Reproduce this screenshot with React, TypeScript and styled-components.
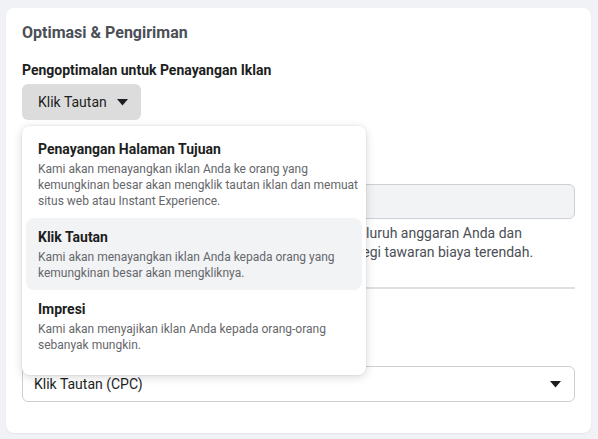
import styled, { createGlobalStyle } from "styled-components";

const GlobalStyle = createGlobalStyle`
  html, body {
    margin: 0;
    padding: 0;
    background: #f0f2f5;
    font-family: Roboto, "Liberation Sans", Arial, sans-serif;
  }
`;

const Page = styled.div`
  width: 598px;
  height: 439px;
  padding: 8px 7px 0 6px;
  box-sizing: border-box;
`;

const Card = styled.div`
  position: relative;
  height: 425px;
  background: #fff;
  border-radius: 8px;
  padding: 15px 16px 0 16px;
  box-sizing: border-box;
  box-shadow: 0 1px 2px rgba(0, 0, 0, 0.06);
`;

const Title = styled.div`
  font-size: 16px;
  line-height: 20px;
  font-weight: 700;
  color: #4b4f56;
`;

const FieldLabel = styled.div<{ $top: number }>`
  margin-top: ${p => p.$top}px;
  font-size: 14px;
  line-height: 18px;
  font-weight: 700;
  color: #1c1e21;
`;

const Caret = () => (
  <svg width="11" height="7" viewBox="0 0 11 7">
    <polygon points="0,0 11,0 5.5,6.5" fill="#1c1e21" />
  </svg>
);

const DropButton = styled.button`
  margin-top: 5px;
  height: 36px;
  display: inline-flex;
  align-items: center;
  gap: 10px;
  padding: 0 13px 0 16px;
  border: none;
  border-radius: 6px;
  background: #dcdcdc;
  font-family: inherit;
  font-size: 14px;
  color: #1c1e21;
`;

const GrayInput = styled.div`
  margin-top: 16px;
  height: 35px;
  box-sizing: border-box;
  background: #f2f3f5;
  border: 1px solid #ccd0d5;
  border-radius: 6px;
`;

const Help = styled.div`
  margin-top: 5px;
  font-size: 14px;
  line-height: 19px;
  color: #4b4f56;
  white-space: nowrap;
`;

const Divider = styled.hr`
  margin: 25px 0 0 0;
  border: none;
  border-top: 2px solid #dddfe2;
`;

const Select = styled.div`
  margin-top: 39px;
  height: 36px;
  box-sizing: border-box;
  border: 1px solid #ccd0d5;
  border-radius: 6px;
  display: flex;
  align-items: center;
  justify-content: space-between;
  padding: 0 13px 0 11px;
  font-size: 14px;
  color: #1c1e21;
`;

const Menu = styled.div`
  position: absolute;
  left: 16px;
  top: 118px;
  width: 344px;
  height: 249px;
  box-sizing: border-box;
  padding: 4px;
  overflow: hidden;
  background: #fff;
  border-radius: 8px;
  box-shadow: 0 2px 10px rgba(0, 0, 0, 0.16), 0 0 0 1px rgba(0, 0, 0, 0.03);
`;

const Option = styled.div<{ $active?: boolean }>`
  padding: 10px 0 9px 12px;
  border-radius: 8px;
  background: ${p => (p.$active ? "#f2f3f5" : "transparent")};
`;

const OptionTitle = styled.div`
  font-size: 14px;
  line-height: 18px;
  font-weight: 700;
  color: #1c1e21;
  margin-bottom: 3px;
`;

const OptionDesc = styled.div`
  font-size: 12px;
  line-height: 16px;
  color: #65676b;
`;

const options = [
  {
    title: "Penayangan Halaman Tujuan",
    desc: "Kami akan menayangkan iklan Anda ke orang yang kemungkinan besar akan mengklik tautan iklan dan memuat situs web atau Instant Experience.",
  },
  {
    title: "Klik Tautan",
    desc: "Kami akan menayangkan iklan Anda kepada orang yang kemungkinan besar akan mengkliknya.",
    active: true,
  },
  {
    title: "Impresi",
    desc: "Kami akan menyajikan iklan Anda kepada orang-orang sebanyak mungkin.",
  },
];

export default function App() {
  return (
    <>
      <GlobalStyle />
      <Page>
        <Card>
          <Title>Optimasi &amp; Pengiriman</Title>
          <FieldLabel $top={18}>Pengoptimalan untuk Penayangan Iklan</FieldLabel>
          <DropButton>
            Klik Tautan
            <Caret />
          </DropButton>
          <FieldLabel $top={30}>Strategi Penawaran</FieldLabel>
          <GrayInput />
          <Help>
            Kami akan terus berusaha agar bisa membelanjakan seluruh anggaran Anda dan
            <br />
            mendapatkan hasil yang terbanyak menggunakan strategi tawaran biaya terendah.
          </Help>
          <Divider />
          <FieldLabel $top={20}>Kapan Anda Dikenai Biaya</FieldLabel>
          <Select>
            Klik Tautan (CPC)
            <Caret />
          </Select>
          <Menu>
            {options.map(o => (
              <Option key={o.title} $active={o.active}>
                <OptionTitle>{o.title}</OptionTitle>
                <OptionDesc>{o.desc}</OptionDesc>
              </Option>
            ))}
          </Menu>
        </Card>
      </Page>
    </>
  );
}
